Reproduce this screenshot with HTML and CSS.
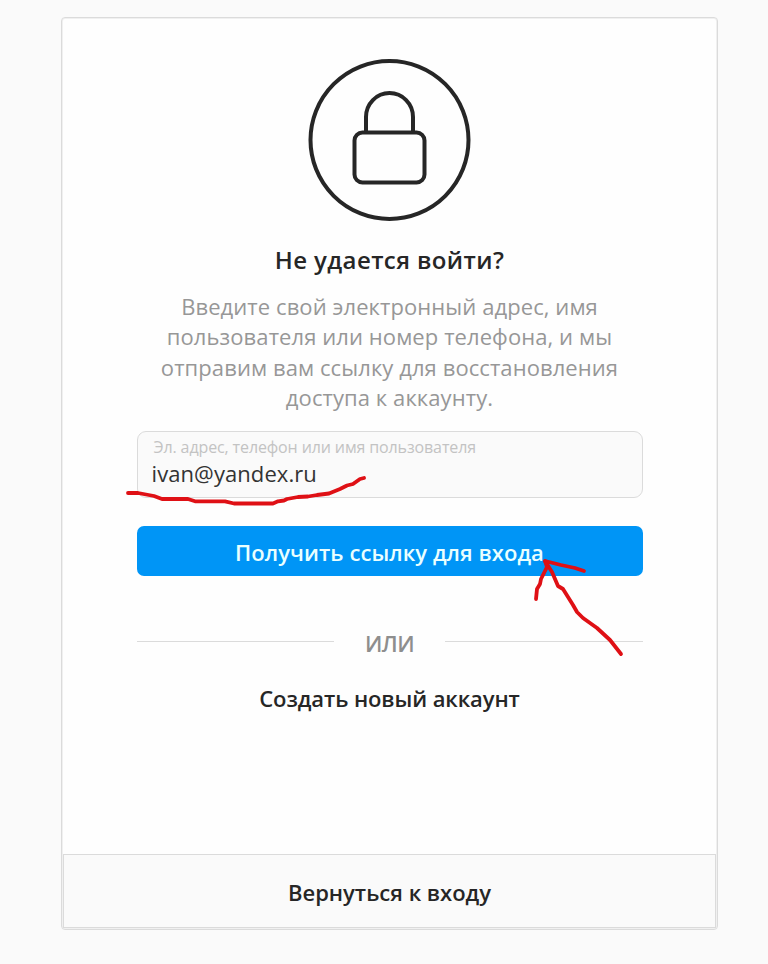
FILE: index.html
```html
<!DOCTYPE html>
<html lang="ru">
<head>
    <meta charset="UTF-8">
    <meta name="viewport" content="width=device-width, initial-scale=1.0">
    <title>Не удается войти?</title>
    <link rel="stylesheet" href="styles.css">
</head>
<body>
    <main class="card">
        <form class="content" onsubmit="return false">
            <svg class="lock" width="164" height="164" viewBox="0 0 164 164" fill="none" stroke="#262626">
                <circle cx="81.500" cy="82" r="79" stroke-width="4"/>
                <path d="M58 74V59a23.500 24 0 0 1 47 0v15" stroke-width="4"/>
                <rect x="46.500" y="74.500" width="70" height="50" rx="8" stroke-width="4"/>
            </svg>
            <h1>Не удается войти?</h1>
            <p class="description">
                Введите свой электронный адрес, имя<br>
                пользователя или номер телефона, и мы<br>
                отправим вам ссылку для восстановления<br>
                доступа к аккаунту.
            </p>
            <label class="field">
                <span class="field-label">Эл. адрес, телефон или имя пользователя</span>
                <input type="text" value="ivan@yandex.ru" spellcheck="false">
            </label>
            <button class="submit" type="submit">Получить ссылку для входа</button>
            <div class="divider"><span>ИЛИ</span></div>
            <a class="create" href="#">Создать новый аккаунт</a>
        </form>
        <a class="back" href="#">Вернуться к входу</a>
    </main>

    <!-- Hand-drawn marks -->
    <svg class="marks" width="768" height="964" viewBox="0 0 768 964">
        <path d="M128 493H138L154 496L162 499H188L195 501.300H225L234 503.500H273L278 501.300L284 500.500L287 499L298 497L308 496.500L317 495L329 493.500L340 489L347 485.500L353 484L360 479L364 478"/>
        <path d="M621 654L610 640L597 628L583 618L577 612L573 605L563 589L558 586L552 572L545 561L561 565L575 568L584 571"/>
        <path d="M545 561L547 567L541 579L540 584L537 589L536 599"/>
    </svg>
</body>
</html>
```
FILE: styles.css
```css
* {
    box-sizing: border-box;
}
body {
    margin: 0;
    padding: 17px 50px 34px 61px;
    min-height: 964px;
    background-color: #fafafa;
    color: #262626;
    font-family: "Open Sans", "Noto Sans", sans-serif;
}
a {
    color: inherit;
    text-decoration: none;
}
.card {
    display: flex;
    flex-direction: column;
    width: 657px;
    height: 913px;
    border: 1px solid #dbdbdb;
    border-radius: 4px;
    background-color: #fefefe;
    box-shadow: inset 0 0 0 1px #f0f0f0;
}
.content {
    display: flex;
    flex: 1;
    flex-direction: column;
    align-items: center;
    padding: 40px 75px 0;
}
.lock {
    display: block;
    flex: none;
}
h1 {
    margin: 21px 0 0;
    font-size: 24px;
    font-weight: 600;
    line-height: 34px;
    letter-spacing: 0.4px;
    white-space: nowrap;
}
.description {
    margin: 14px 0 19px;
    color: #979797;
    font-size: 22px;
    line-height: 30.3px;
    letter-spacing: 0.08px;
    text-align: center;
    white-space: nowrap;
}
.field {
    display: flex;
    flex-direction: column;
    width: 506px;
    height: 67px;
    padding: 4px 14px;
    border: 1px solid #dbdbdb;
    border-radius: 9px;
    background-color: #fafafa;
}
.field-label {
    padding-left: 2px;
    color: #c3c3c3;
    font-size: 16px;
    line-height: 22px;
    letter-spacing: -0.12px;
    white-space: nowrap;
}
.field input {
    width: 100%;
    height: 30px;
    padding: 0;
    border: 0;
    outline: 0;
    background: none;
    color: #333;
    font: 22px/30px "Open Sans", "Noto Sans", sans-serif;
    letter-spacing: 0.08px;
}
.submit {
    width: 506px;
    height: 50px;
    margin-top: 28px;
    padding: 1px 0 0;
    border: 0;
    border-radius: 7px;
    background-color: #0095f6;
    color: #eaffff;
    font: 600 22px/30px "Open Sans", "Noto Sans", sans-serif;
    letter-spacing: 0.06px;
    white-space: nowrap;
}
.divider {
    display: flex;
    align-items: center;
    gap: 31px;
    width: 506px;
    height: 30px;
    margin-top: 51px;
    color: #8e8e8e;
    font-size: 22px;
    font-weight: 600;
    letter-spacing: -0.5px;
}
.divider span {
    padding-top: 2px;
}
.divider::before,
.divider::after {
    content: "";
    flex: 1;
    height: 1px;
    margin-bottom: 1px;
    background-color: #dbdbdb;
}
.create {
    margin-top: 26px;
    font-size: 22px;
    font-weight: 600;
    line-height: 30px;
    letter-spacing: -0.1px;
}
.back {
    display: flex;
    align-items: center;
    justify-content: center;
    height: 74px;
    margin: 0 1px 1px;
    padding-top: 1px;
    border: 1px solid #dbdbdb;
    background-color: #fafafa;
    font-size: 22px;
    font-weight: 600;
}
.marks {
    position: absolute;
    top: 0;
    left: 0;
    pointer-events: none;
    fill: none;
    stroke: #df1015;
    stroke-width: 3.8;
    stroke-linecap: round;
    stroke-linejoin: round;
}
```
